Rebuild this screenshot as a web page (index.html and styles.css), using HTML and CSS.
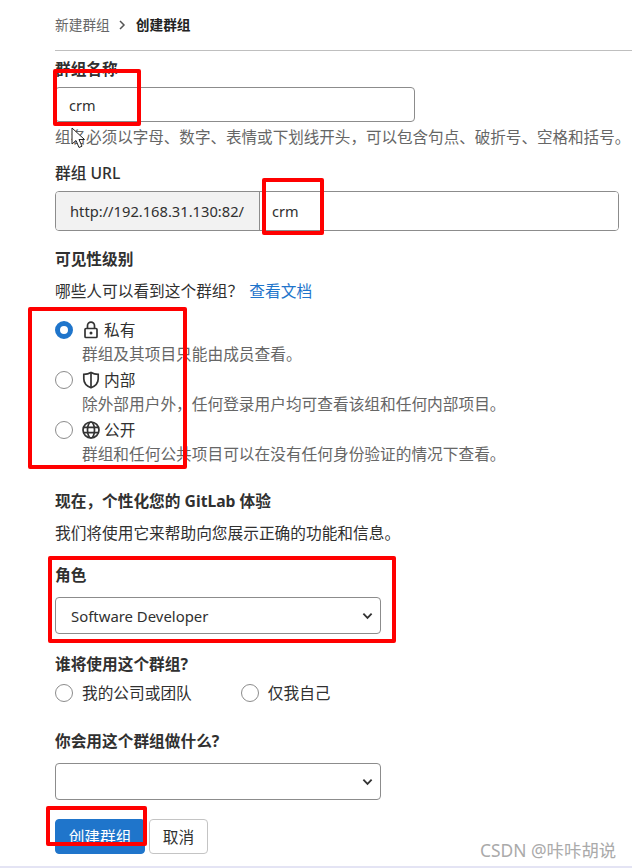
FILE: index.html
```html
<!DOCTYPE html>
<html lang="zh-CN">
<head>
  <meta charset="UTF-8" />
  <title>创建群组</title>
  <link rel="stylesheet" href="styles.css">
</head>
<body>
  <div class="page">
    <nav class="crumbs">
      <span class="crumb-link">新建群组</span>
      <svg class="crumb-sep" viewBox="0 0 8 12"><path d="M2 2l4 4-4 4" /></svg>
      <strong>创建群组</strong>
    </nav>

    <label class="label first" for="name">群组名称</label>
    <input class="field name-field" id="name" value="crm" />
    <p class="help">组名必须以字母、数字、表情或下划线开头，可以包含句点、破折号、空格和括号。</p>

    <label class="label url-label">群组 URL</label>
    <div class="url-group">
      <span class="url-prefix">http://192.168.31.130:82/</span>
      <input class="url-input" value="crm" />
    </div>

    <div class="label vis-title">可见性级别</div>
    <p class="sub">哪些人可以看到这个群组？ <a href="#">查看文档</a></p>

    <div class="vis-list">
      <div class="vis-item">
        <label class="radio-row">
          <input type="radio" name="vis" checked />
          <svg class="vis-icon" viewBox="0 0 18 18"><rect x="3" y="7.500" width="12" height="9" rx="1" /><path d="M5.500 7.500V4.700a3.500 3.500 0 0 1 7 0v2.800" /><circle class="solid" cx="9" cy="12" r="1.500" /></svg>
          <span>私有</span>
        </label>
        <p class="vis-desc">群组及其项目只能由成员查看。</p>
      </div>
      <div class="vis-item">
        <label class="radio-row">
          <input type="radio" name="vis" />
          <svg class="vis-icon" viewBox="0 0 18 18"><path d="M9 1.500C6.800 2.800 4.500 3.300 1.800 3.300v4.500c0 4.300 3.300 7.500 7.200 9 3.900-1.500 7.200-4.700 7.200-9V3.300C13.500 3.300 11.200 2.800 9 1.500z" /><path class="bar" d="M9 2v14" /></svg>
          <span>内部</span>
        </label>
        <p class="vis-desc">除外部用户外，任何登录用户均可查看该组和任何内部项目。</p>
      </div>
      <div class="vis-item">
        <label class="radio-row">
          <input type="radio" name="vis" />
          <svg class="vis-icon" viewBox="0 0 18 18"><circle cx="9" cy="9" r="8" /><ellipse cx="9" cy="9" rx="3.500" ry="8" /><path d="M1.500 6.300h15M1.500 11.700h15" /></svg>
          <span>公开</span>
        </label>
        <p class="vis-desc">群组和任何公共项目可以在没有任何身份验证的情况下查看。</p>
      </div>
    </div>

    <div class="label now-title">现在，个性化您的 GitLab 体验</div>
    <p class="sub">我们将使用它来帮助向您展示正确的功能和信息。</p>

    <label class="label role-label" for="role">角色</label>
    <select class="picker" id="role">
      <option>Software Developer</option>
    </select>

    <div class="label who-title">谁将使用这个群组?</div>
    <div class="who-row">
      <label class="who-option"><input type="radio" name="who" /><span>我的公司或团队</span></label>
      <label class="who-option"><input type="radio" name="who" /><span>仅我自己</span></label>
    </div>

    <label class="label what-label" for="what">你会用这个群组做什么?</label>
    <select class="picker" id="what">
      <option></option>
    </select>

    <div class="actions">
      <button class="btn btn-primary">创建群组</button>
      <button class="btn">取消</button>
    </div>

    <!-- screenshot annotations -->
    <div class="mark mark-name"></div>
    <div class="mark mark-url"></div>
    <div class="mark mark-vis"></div>
    <div class="mark mark-role"></div>
    <div class="mark mark-submit"></div>
    <svg class="cursor" viewBox="0 0 14 22"><path d="M1 1v16l4-3.500 3 7 3-1.300-3-6.700h5.500z" /></svg>
    <div class="watermark">CSDN @咔咔胡说</div>
  </div>
</body>
</html>
```

FILE: styles.css
```css
* {
  box-sizing: border-box;
}
body {
  margin: 0;
  background: #fff;
  color: #303030;
  font-family: "Noto Sans", "Noto Sans CJK SC", sans-serif;
  font-size: 15.7px;
  line-height: 20px;
}
p {
  margin: 0;
}
input, select, button {
  font: inherit;
  color: inherit;
}
.page {
  position: relative;
  height: 868px;
  padding-left: 55px;
  overflow: hidden;
  border-bottom: 2px solid #e4e4f4;
}
.crumbs {
  display: flex;
  align-items: center;
  height: 51px;
  border-bottom: 1px solid #bfbfbf;
  font-size: 13.7px;
}
.crumb-link {
  color: #666;
}
.crumb-sep {
  width: 8px;
  height: 12px;
  margin: 0 10px 0 8px;
  fill: none;
  stroke: #555;
  stroke-width: 1.5;
}
.crumbs strong {
  color: #222;
  font-weight: 700;
}
.label {
  display: block;
  font-weight: 700;
}
.first {
  margin-top: 8px;
}
.field {
  display: block;
  width: 360px;
  height: 35px;
  margin-top: 8px;
  padding: 0 13px;
  border: 1px solid #8c8c8c;
  border-radius: 4px;
  background: #fff;
  font-size: 14.5px;
}
.help {
  margin-top: 5px;
  color: #666;
  font-size: 15.55px;
  white-space: nowrap;
}
.url-label {
  margin-top: 16px;
  font-weight: 500;
}
.url-group {
  display: flex;
  width: 564px;
  height: 40px;
  margin-top: 8px;
  border: 1px solid #8c8c8c;
  border-radius: 4px;
  overflow: hidden;
}
.url-prefix {
  display: flex;
  align-items: center;
  width: 204px;
  padding-left: 14px;
  border-right: 1px solid #8c8c8c;
  background: #f2f2f2;
  font-size: 14.7px;
  white-space: nowrap;
}
.url-input {
  flex: 1;
  min-width: 0;
  padding: 0 12px;
  border: 0;
  outline: 0;
  font-size: 14.5px;
}
.vis-title {
  margin-top: 18px;
}
.sub {
  margin-top: 12px;
}
.sub a {
  margin-left: 2px;
  color: #1f75cb;
  text-decoration: none;
}
.vis-list {
  display: flex;
  flex-direction: column;
  gap: 6px;
  margin-top: 19px;
}
.radio-row {
  display: flex;
  align-items: center;
  height: 20px;
}
input[type="radio"] {
  appearance: none;
  flex: none;
  width: 18px;
  height: 18px;
  margin: 0;
  border: 1px solid #8c8c8c;
  border-radius: 50%;
  background: #fff;
}
input[type="radio"]:checked {
  border: 5.5px solid #1f75cb;
}
.vis-icon {
  width: 18px;
  height: 18px;
  margin: 0 4px 0 9px;
  fill: none;
  stroke: #333;
  stroke-width: 1.7;
}
.vis-icon .solid {
  fill: #333;
  stroke: none;
}
.vis-desc {
  margin-top: 4px;
  padding-left: 27px;
  color: #666;
  white-space: nowrap;
}
.now-title {
  margin-top: 27px;
}
.role-label {
  margin-top: 22px;
}
.picker {
  appearance: none;
  display: block;
  width: 326px;
  height: 37px;
  margin-top: 12px;
  padding: 0 30px 0 15px;
  border: 1px solid #8c8c8c;
  border-radius: 4px;
  background: #fff url("data:image/svg+xml,%3Csvg xmlns='http://www.w3.org/2000/svg' viewBox='0 0 12 8'%3E%3Cpath d='M1.500 1.500L6 6l4.500-4.500' fill='none' stroke='%23333' stroke-width='2'/%3E%3C/svg%3E") no-repeat right 7px center / 11px 8px;
  font-size: 14.9px;
}
.who-title {
  margin-top: 20px;
}
.who-row {
  display: flex;
  gap: 49px;
  margin-top: 9px;
}
.who-option {
  display: flex;
  align-items: center;
  gap: 9px;
  height: 20px;
}
.what-label {
  margin-top: 28px;
}
.actions {
  display: flex;
  gap: 4px;
  margin-top: 19px;
}
.btn {
  width: 59px;
  height: 35px;
  padding: 0;
  border: 1px solid #c4c4c4;
  border-radius: 4px;
  background: #fff;
}
.btn-primary {
  width: 90px;
  border-color: #1f75cb;
  background: #1f75cb;
  color: #fff;
}
.mark {
  position: absolute;
  border: 4px solid #f00;
  border-radius: 2px;
}
.mark-name {
  left: 53px;
  top: 69px;
  width: 88px;
  height: 57px;
}
.mark-url {
  left: 262px;
  top: 178px;
  width: 62px;
  height: 57px;
}
.mark-vis {
  left: 28px;
  top: 307px;
  width: 159px;
  height: 162px;
}
.mark-role {
  left: 48px;
  top: 556px;
  width: 348px;
  height: 87px;
}
.mark-submit {
  left: 46px;
  top: 806px;
  width: 101px;
  height: 40px;
}
.cursor {
  position: absolute;
  left: 71px;
  top: 127px;
  width: 14px;
  height: 22px;
  fill: #fff;
  stroke: #222;
  stroke-width: 1;
}
.watermark {
  position: absolute;
  left: 480px;
  top: 840px;
  color: #aaa;
  font-size: 17.4px;
  white-space: nowrap;
}
```
